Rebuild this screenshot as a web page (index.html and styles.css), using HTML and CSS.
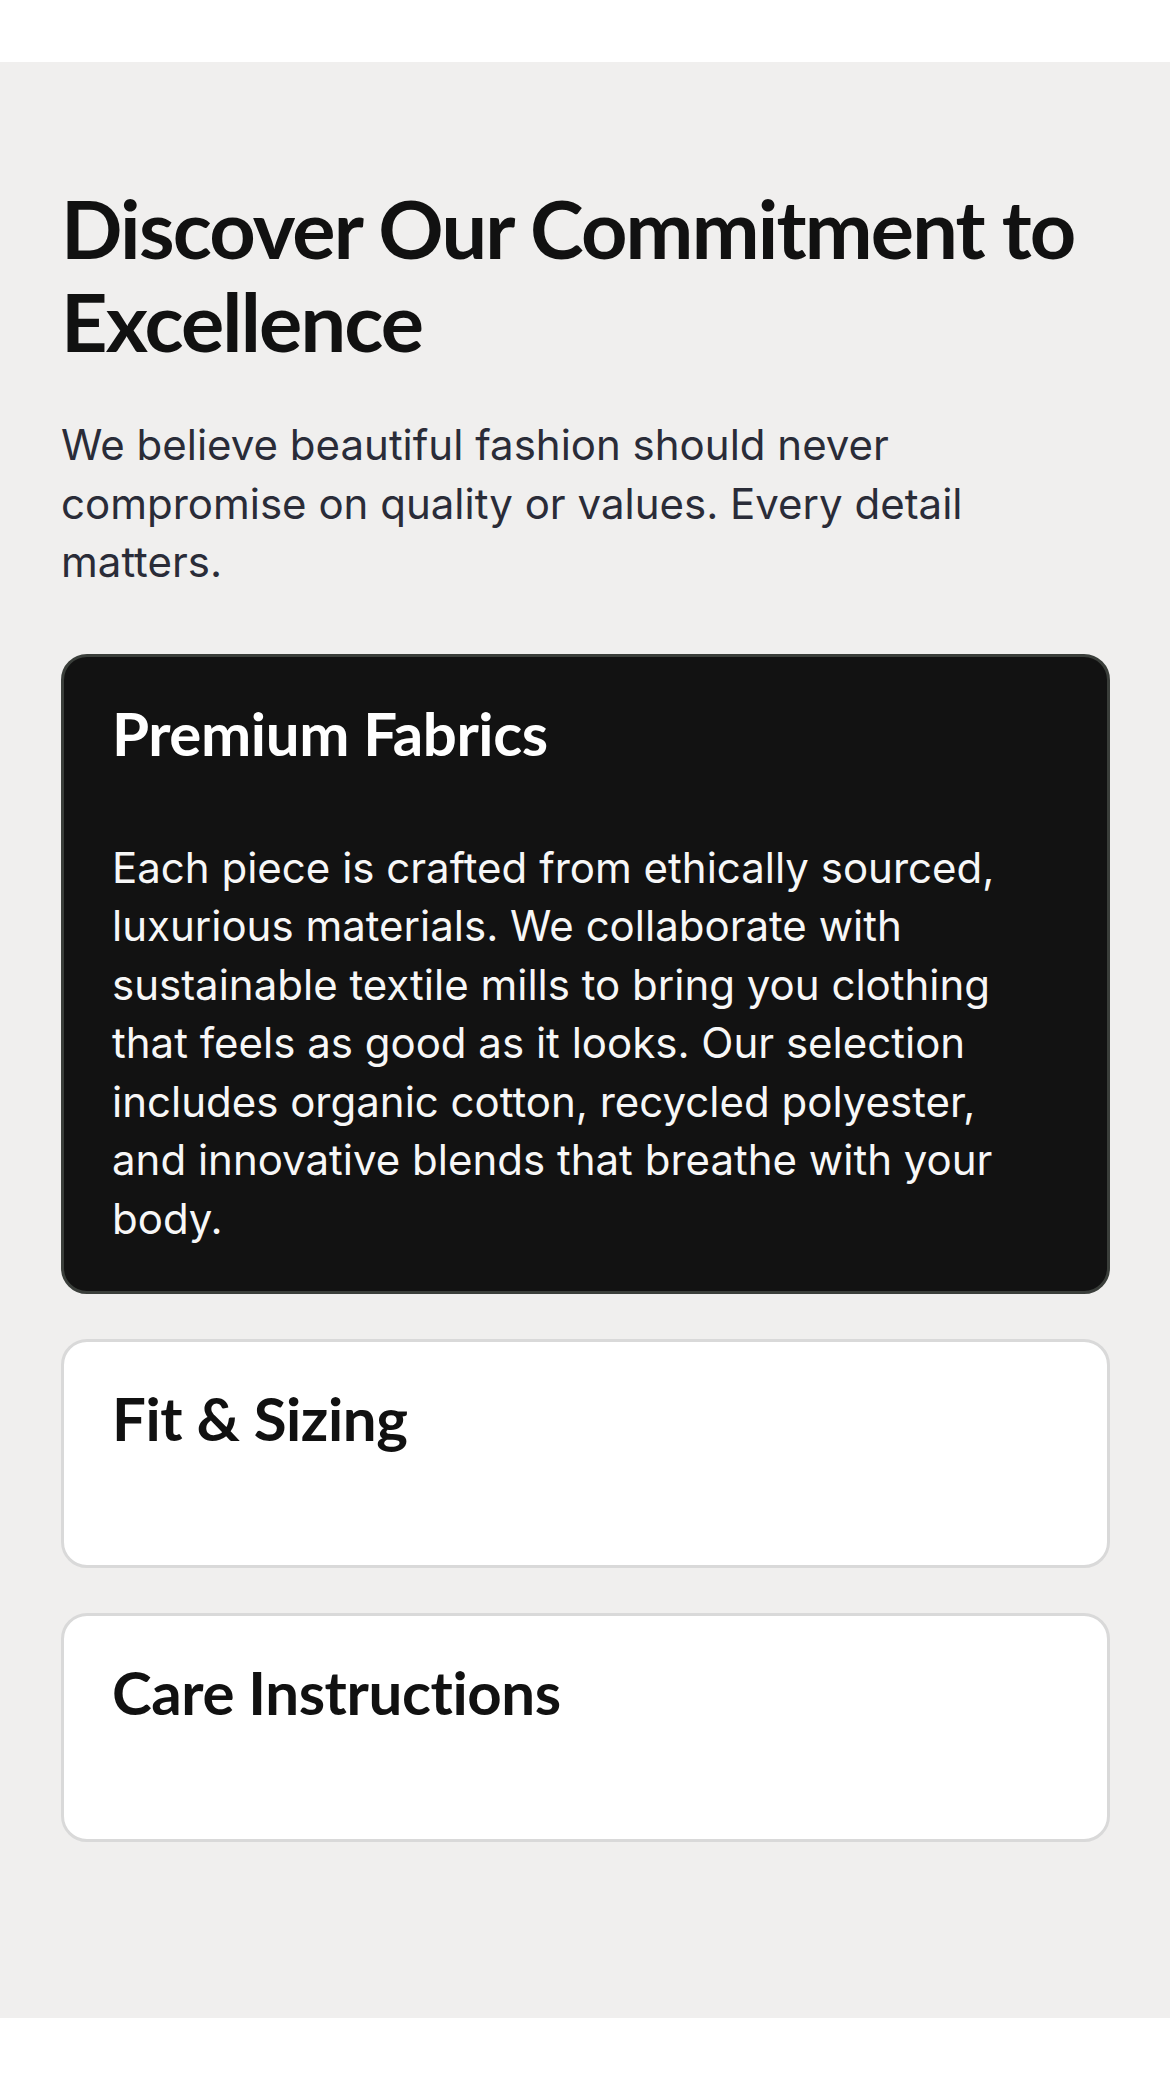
FILE: index.html
```html
<!DOCTYPE html>
<html lang="en">
<head>
<meta charset="UTF-8">
<meta name="viewport" content="width=device-width, initial-scale=1.0">
<title>Discover Our Commitment to Excellence</title>
<link rel="stylesheet" href="styles.css">
</head>
<body>
<div class="top-bar"></div>
<section class="commit">
    <h2 class="commit-title">Discover Our Commitment to Excellence</h2>
    <p class="commit-lead">We believe beautiful fashion should never compromise on quality or values. Every detail matters.</p>

    <div class="cards">
        <div class="card card-open">
            <h3 class="card-title">Premium Fabrics</h3>
            <p class="card-text">Each piece is crafted from ethically sourced, luxurious materials. We collaborate with sustainable textile mills to bring you clothing that feels as good as it looks. Our selection includes organic cotton, recycled polyester, and innovative blends that breathe with your body.</p>
        </div>
        <div class="card">
            <h3 class="card-title">Fit &amp; Sizing</h3>
        </div>
        <div class="card">
            <h3 class="card-title">Care Instructions</h3>
        </div>
    </div>
</section>
</body>
</html>
```

FILE: styles.css
```css
body,div,p,h2,h3,section{margin:0;padding:0;}
body{background:#fff;font-family:Inter,"Noto Sans",sans-serif;color:#111;}

.top-bar{height:62px;background:#fff;}

.commit{background:#f0efee;padding:120px 60px 176px 61px;}
.commit-title{font:700 81px/92.5px Lato,"Noto Sans",sans-serif;letter-spacing:-1.8px;color:#111;margin-bottom:49px;}
.commit-lead{font-size:42px;line-height:58.5px;color:#2a2c38;margin-bottom:62px;}

.cards{display:flex;flex-direction:column;gap:45px;}
.card{background:#fff;border:3px solid #d9d9d9;border-radius:26px;padding:40px 48px 51px;}
.card-title{font:700 60px/72px Lato,"Noto Sans",sans-serif;letter-spacing:-0.4px;color:#111;margin-bottom:60px;}
.card-open{background:#121212;border-color:#3a3e3a;padding-bottom:48px;}
.card-open .card-title{color:#fff;margin-bottom:0;}
.card-text{font-size:42px;line-height:58.5px;color:#f7f7f7;padding-top:70px;margin-bottom:-5px;}
```
